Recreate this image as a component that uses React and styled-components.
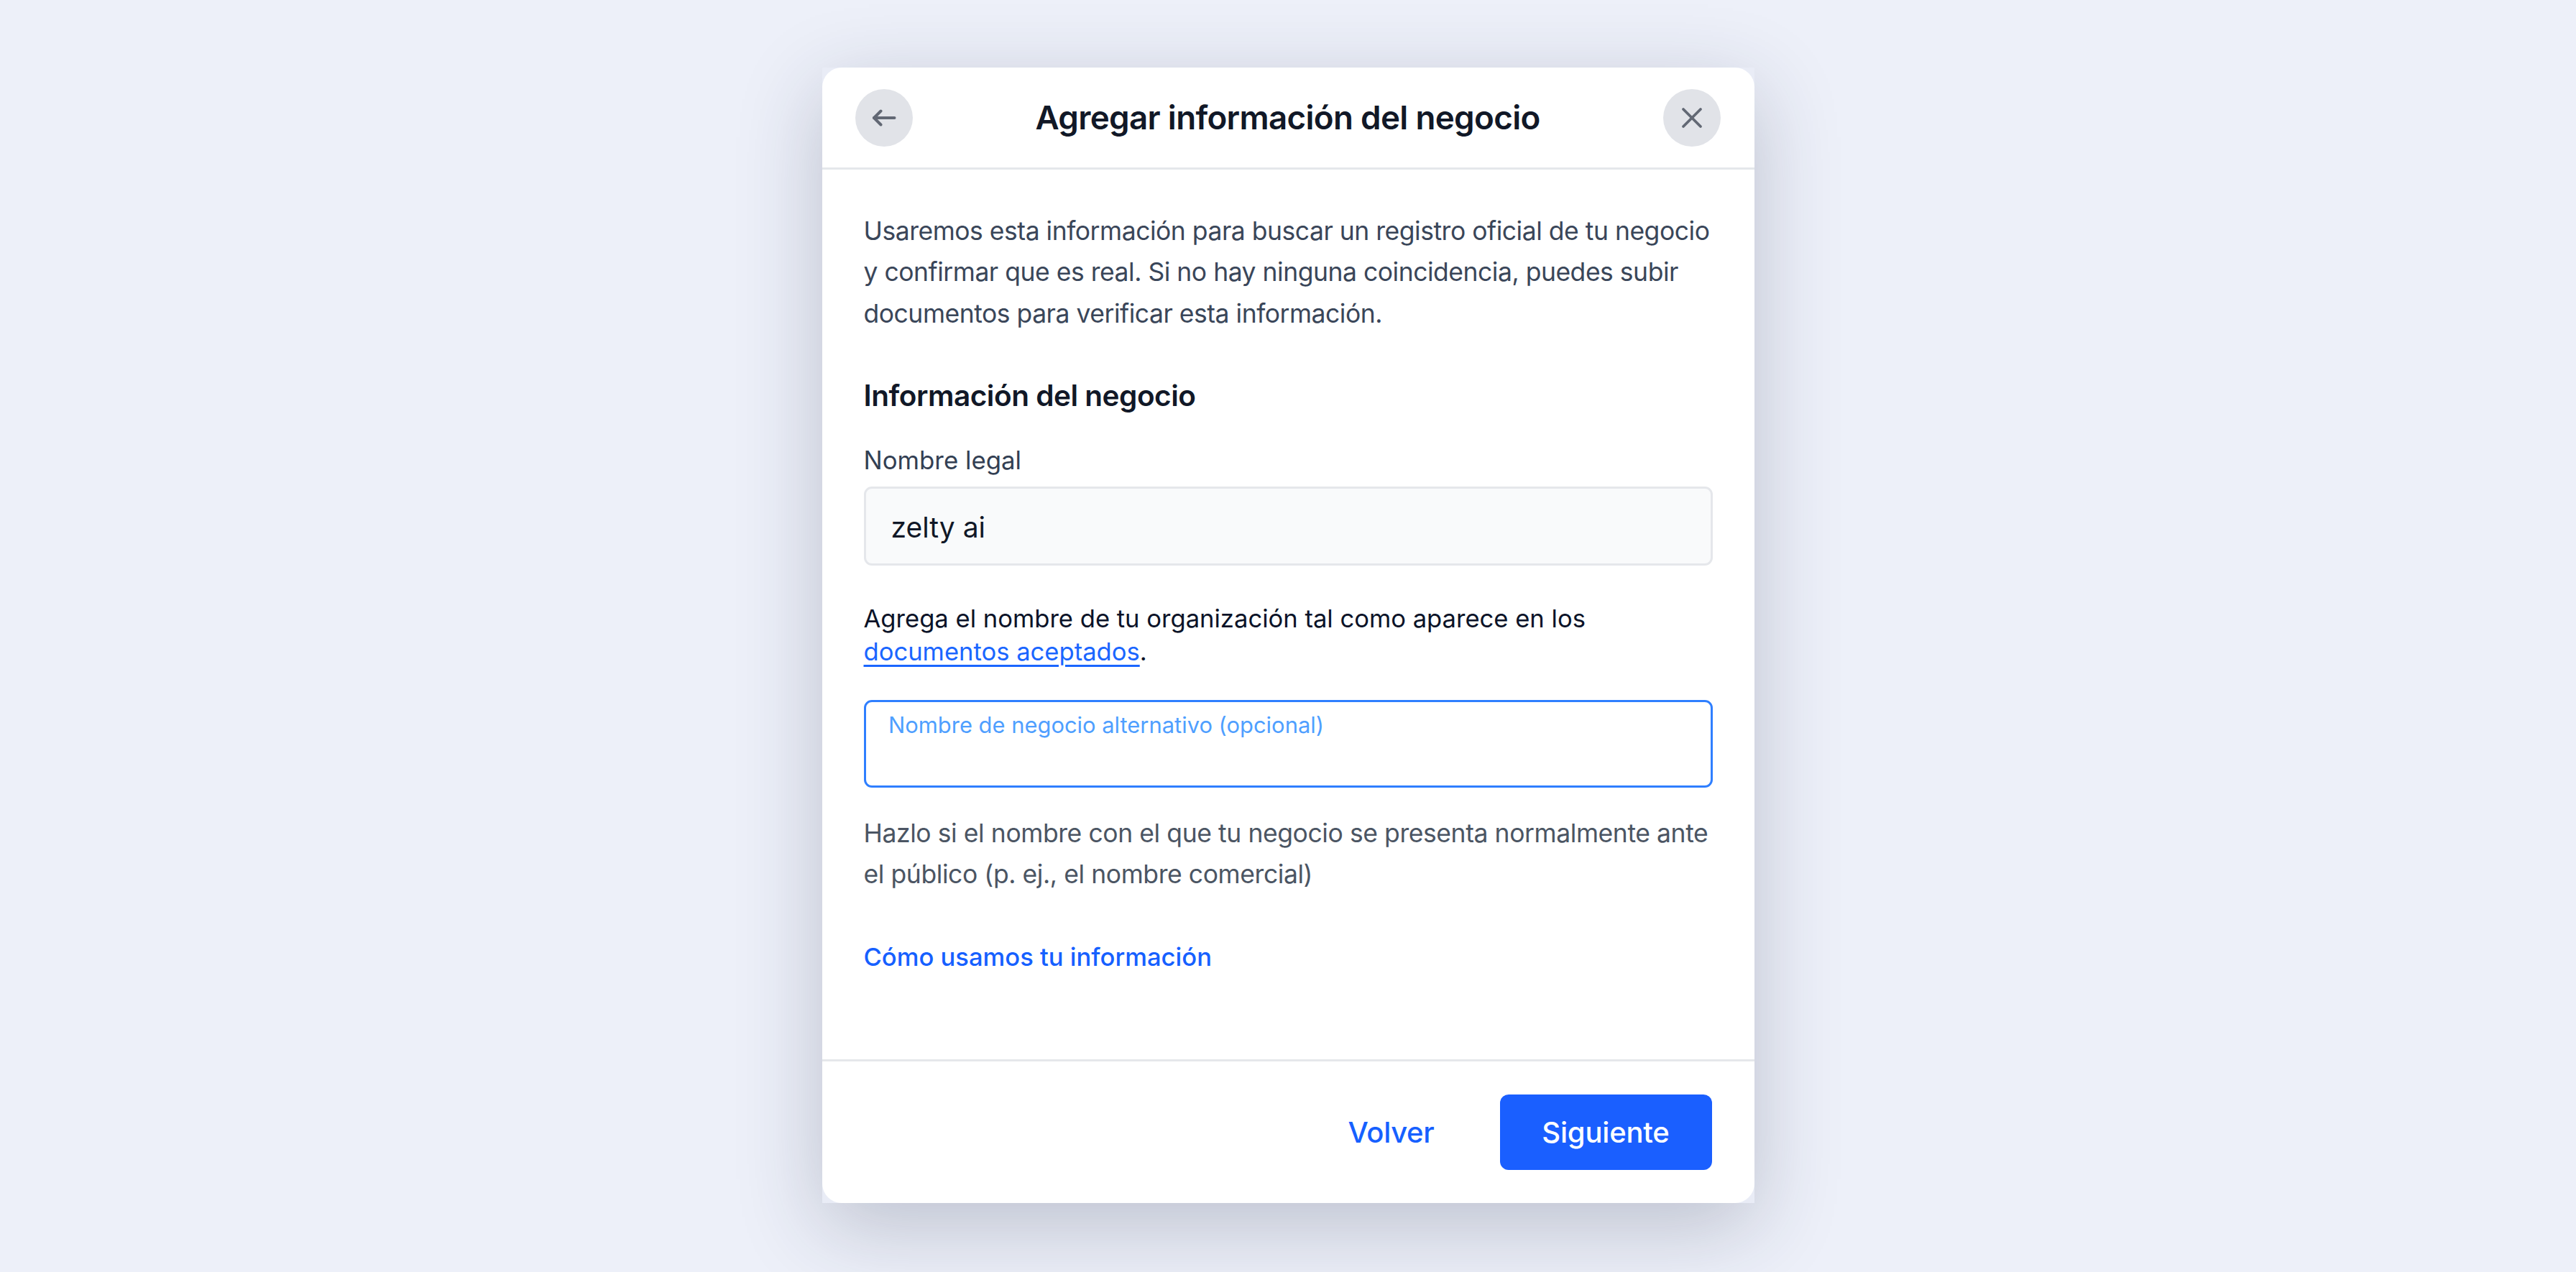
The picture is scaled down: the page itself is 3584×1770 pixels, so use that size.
import React from "react";
import styled, { createGlobalStyle } from "styled-components";

const Global = createGlobalStyle`
  html, body { margin: 0; padding: 0; background: #edf0f9; }
  body { font-family: Inter, "Liberation Sans", sans-serif; -webkit-font-smoothing: antialiased; }
  * { box-sizing: border-box; }
`;

const Page = styled.div`
  width: 3584px;
  height: 1770px;
  overflow: hidden;
  background: #edf0f9;
  padding-top: 94px;
  display: flex;
  justify-content: center;
  align-items: flex-start;
`;

const Frame = styled.div`
  width: 1297px;
  height: 1580px;
  background: #e9ecf6;
  box-shadow: 0 32px 110px rgba(34, 42, 70, 0.24);
`;

const Dialog = styled.div`
  height: 100%;
  background: #fff;
  border-radius: 27px;
  overflow: hidden;
  display: flex;
  flex-direction: column;
`;

const Header = styled.header`
  height: 142px;
  flex: none;
  display: flex;
  align-items: center;
  justify-content: space-between;
  padding: 0 47px 0 46px;
  border-bottom: 3px solid #e5e7eb;
`;

const RoundButton = styled.button`
  width: 80px;
  height: 80px;
  border: 0;
  padding: 0;
  border-radius: 50%;
  background: #e1e3e8;
  display: flex;
  align-items: center;
  justify-content: center;
  svg { display: block; }
`;

const Title = styled.h1`
  margin: 0;
  font-size: 45.7px;
  letter-spacing: -0.66px;
  line-height: 64px;
  font-weight: 600;
  color: #111827;
  white-space: nowrap;
`;

const Body = styled.main`
  flex: 1;
  padding: 57px 58px 0;
`;

const Intro = styled.p`
  margin: 0;
  font-size: 35.5px;
  letter-spacing: -0.48px;
  line-height: 57.3px;
  color: #3a4659;
  white-space: nowrap;
`;

const SectionTitle = styled.h2`
  margin: 54px 0 0;
  font-size: 40.5px;
  letter-spacing: -0.48px;
  line-height: 64px;
  font-weight: 600;
  color: #111827;
`;

const FieldLabel = styled.label`
  display: block;
  margin-top: 32px;
  font-size: 34.8px;
  letter-spacing: 0;
  line-height: 50px;
  font-weight: 430;
  color: #333f53;
`;

const ReadOnlyInput = styled.div`
  margin-top: 12px;
  height: 110px;
  border: 3px solid #e5e7eb;
  border-radius: 11px;
  background: #f9fafb;
  display: flex;
  align-items: center;
  padding: 3px 35px 0;
  font-size: 39px;
  color: #111827;
`;

const Note = styled.p`
  margin: 50px 0 0;
  font-size: 34.6px;
  line-height: 46px;
  color: #0b1328;
  white-space: nowrap;
`;

const InlineLink = styled.a`
  color: #1a66ff;
  text-decoration: underline;
  text-underline-offset: 6px;
  text-decoration-thickness: 2.5px;
`;

const ActiveInput = styled.div`
  margin-top: 45px;
  height: 122px;
  border: 3.5px solid #2f7fff;
  border-radius: 11px;
  padding: 12.5px 31.5px;
  font-size: 30.9px;
  line-height: 40px;
  color: #4f9fff;
  white-space: nowrap;
`;

const Helper = styled.p`
  margin: 35px 0 0;
  font-size: 35.5px;
  letter-spacing: -0.42px;
  line-height: 57.3px;
  color: #4b5563;
  white-space: nowrap;
`;

const HelpLink = styled.a`
  display: block;
  margin-top: 58px;
  font-size: 34.6px;
  line-height: 57px;
  font-weight: 470;
  color: #1660ff;
`;

const Footer = styled.footer`
  height: 200px;
  flex: none;
  border-top: 3px solid #e5e7eb;
  display: flex;
  align-items: flex-start;
  justify-content: flex-end;
  gap: 91px;
  padding: 46px 59px 0 0;
`;

const GhostButton = styled.button`
  height: 105px;
  border: 0;
  padding: 0;
  background: none;
  font: 470 40px Inter, sans-serif;
  letter-spacing: -0.3px;
  color: #1660ff;
`;

const PrimaryButton = styled.button`
  width: 295px;
  height: 105px;
  border: 0;
  border-radius: 12px;
  background: #1a5fff;
  font: 450 40px Inter, sans-serif;
  letter-spacing: -0.2px;
  color: #fff;
`;

const BackIcon = () => (
  <svg width="34" height="24" viewBox="0 0 34 24" fill="none" stroke="#626874" strokeWidth="4" strokeLinecap="round" strokeLinejoin="round">
    <path d="M31.5 12H3" />
    <path d="M12.5 2.5 3 12l9.5 9.5" />
  </svg>
);

const CloseIcon = () => (
  <svg width="30" height="30" viewBox="0 0 30 30" fill="none" stroke="#626874" strokeWidth="3.8" strokeLinecap="round">
    <path d="M3 3 27 27" />
    <path d="M27 3 3 27" />
  </svg>
);

export default function App() {
  return (
    <Page>
      <Global />
      <Frame>
        <Dialog>
          <Header>
            <RoundButton aria-label="Volver"><BackIcon /></RoundButton>
            <Title>Agregar información del negocio</Title>
            <RoundButton aria-label="Cerrar"><CloseIcon /></RoundButton>
          </Header>
          <Body>
            <Intro>
              Usaremos esta información para buscar un registro oficial de tu negocio<br />
              y confirmar que es real. Si no hay ninguna coincidencia, puedes subir<br />
              documentos para verificar esta información.
            </Intro>
            <SectionTitle>Información del negocio</SectionTitle>
            <FieldLabel>Nombre legal</FieldLabel>
            <ReadOnlyInput>zelty ai</ReadOnlyInput>
            <Note>
              Agrega el nombre de tu organización tal como aparece en los<br />
              <InlineLink>documentos aceptados</InlineLink>.
            </Note>
            <ActiveInput>Nombre de negocio alternativo (opcional)</ActiveInput>
            <Helper>
              Hazlo si el nombre con el que tu negocio se presenta normalmente ante<br />
              el público (p. ej., el nombre comercial)
            </Helper>
            <HelpLink>Cómo usamos tu información</HelpLink>
          </Body>
          <Footer>
            <GhostButton>Volver</GhostButton>
            <PrimaryButton>Siguiente</PrimaryButton>
          </Footer>
        </Dialog>
      </Frame>
    </Page>
  );
}
